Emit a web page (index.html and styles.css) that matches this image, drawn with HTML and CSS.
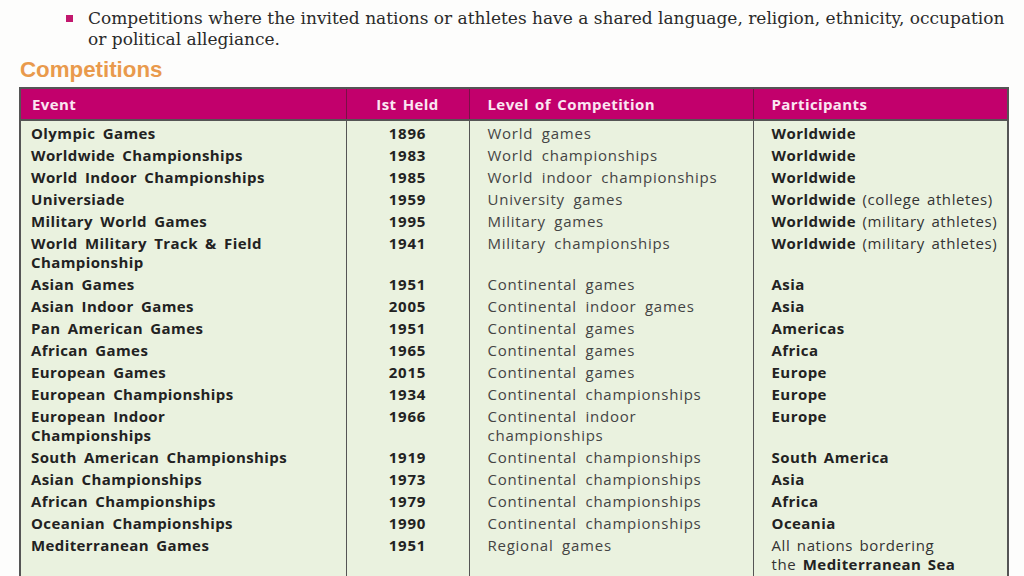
FILE: index.html
```html
<!DOCTYPE html>
<html lang="en">
<head>
<meta charset="utf-8">
<title>Competitions</title>
<link rel="stylesheet" href="styles.css">
</head>
<body>
<div class="page">
  <ul class="intro">
    <li>Competitions where the invited nations or athletes have a shared language, religion, ethnicity, occupation or political allegiance.</li>
  </ul>
  <h2 class="title">Competitions</h2>
  <table class="comp">
    <colgroup>
      <col class="c-event"><col class="c-year"><col class="c-level"><col class="c-part">
    </colgroup>
    <thead>
      <tr><th>Event</th><th class="center">Ist Held</th><th class="pad">Level of Competition</th><th class="pad">Participants</th></tr>
    </thead>
    <tbody>
      <tr class="first"><td>Olympic Games</td><td class="year">1896</td><td class="lvl">World games</td><td class="part"><b>Worldwide</b></td></tr>
      <tr><td>Worldwide Championships</td><td class="year">1983</td><td class="lvl">World championships</td><td class="part"><b>Worldwide</b></td></tr>
      <tr><td>World Indoor Championships</td><td class="year">1985</td><td class="lvl">World indoor championships</td><td class="part"><b>Worldwide</b></td></tr>
      <tr><td>Universiade</td><td class="year">1959</td><td class="lvl">University games</td><td class="part"><b>Worldwide</b> (college athletes)</td></tr>
      <tr><td>Military World Games</td><td class="year">1995</td><td class="lvl">Military games</td><td class="part"><b>Worldwide</b> (military athletes)</td></tr>
      <tr><td>World Military Track &amp; Field<br>Championship</td><td class="year">1941</td><td class="lvl">Military championships</td><td class="part"><b>Worldwide</b> (military athletes)</td></tr>
      <tr><td>Asian Games</td><td class="year">1951</td><td class="lvl">Continental games</td><td class="part"><b>Asia</b></td></tr>
      <tr><td>Asian Indoor Games</td><td class="year">2005</td><td class="lvl">Continental indoor games</td><td class="part"><b>Asia</b></td></tr>
      <tr><td>Pan American Games</td><td class="year">1951</td><td class="lvl">Continental games</td><td class="part"><b>Americas</b></td></tr>
      <tr><td>African Games</td><td class="year">1965</td><td class="lvl">Continental games</td><td class="part"><b>Africa</b></td></tr>
      <tr><td>European Games</td><td class="year">2015</td><td class="lvl">Continental games</td><td class="part"><b>Europe</b></td></tr>
      <tr><td>European Championships</td><td class="year">1934</td><td class="lvl">Continental championships</td><td class="part"><b>Europe</b></td></tr>
      <tr><td>European Indoor<br>Championships</td><td class="year">1966</td><td class="lvl">Continental indoor<br>championships</td><td class="part"><b>Europe</b></td></tr>
      <tr><td>South American Championships</td><td class="year">1919</td><td class="lvl">Continental championships</td><td class="part"><b>South America</b></td></tr>
      <tr><td>Asian Championships</td><td class="year">1973</td><td class="lvl">Continental championships</td><td class="part"><b>Asia</b></td></tr>
      <tr><td>African Championships</td><td class="year">1979</td><td class="lvl">Continental championships</td><td class="part"><b>Africa</b></td></tr>
      <tr><td>Oceanian Championships</td><td class="year">1990</td><td class="lvl">Continental championships</td><td class="part"><b>Oceania</b></td></tr>
      <tr><td>Mediterranean Games</td><td class="year">1951</td><td class="lvl">Regional games</td><td class="part">All nations bordering<br>the <b>Mediterranean Sea</b></td></tr>
    </tbody>
  </table>
</div>
</body>
</html>
```
FILE: styles.css
```css
html, body {
  margin: 0;
  padding: 0;
  background: #fdfdfc;
  overflow: hidden;
}
.page {
  width: 1024px;
  height: 576px;
  overflow: hidden;
  padding: 8px 0 0 19px;
  box-sizing: border-box;
}
.intro {
  list-style: none;
  margin: 0;
  padding: 0 0 0 69px;
  font-family: "DejaVu Serif", "Liberation Serif", serif;
  font-size: 17px;
  line-height: 21px;
  color: #2a2a2a;
  width: 928px;
}
.intro li {
  position: relative;
}
.intro li::before {
  content: "";
  position: absolute;
  left: -22px;
  top: 7px;
  width: 7px;
  height: 7px;
  background: #c2186e;
}
.title {
  margin: 9px 0 6px 1px;
  font-family: "Liberation Sans", Arial, sans-serif;
  font-weight: bold;
  font-size: 22.3px;
  line-height: 22px;
  color: #e99a4c;
}
.comp {
  border-collapse: collapse;
  width: 988px;
  table-layout: fixed;
  font-family: "Open Sans", "Lato", sans-serif;
  font-size: 15px;
  color: #222;
  background: #eaf2df;
  border: 2px solid #555;
}
.c-event { width: 326px; }
.c-year { width: 123px; }
.c-level { width: 284px; }
.c-part { width: 255px; }
.comp th {
  background: #c2006c;
  color: #fbe6f2;
  font-weight: bold;
  text-align: left;
  height: 30px;
  padding: 0 11px;
  font-size: 15px;
  letter-spacing: 0.4px;
  border-left: 1px solid #7a1046;
  border-bottom: 2px solid #555;
  word-spacing: 2px;
}
.comp th.center { text-align: center; }
.comp th.pad { padding-left: 18px; }
.comp td {
  vertical-align: top;
  padding: 1px 10px 2px 10px;
  line-height: 19px;
  border-left: 1.5px solid #555;
  font-weight: bold;
  letter-spacing: 0.4px;
  word-spacing: 3px;
  white-space: nowrap;
}
.comp tr.first td { padding-top: 3px; }
.comp td.year { text-align: center; letter-spacing: 0.8px; }
.comp td.lvl {
  font-weight: normal;
  color: #444;
  padding-left: 18px;
  letter-spacing: 0.75px;
  word-spacing: 4px;
}
.comp td.part {
  font-weight: normal;
  color: #333;
  padding-left: 18px;
  letter-spacing: 0.6px;
  word-spacing: 2px;
}
.comp td.part b {
  font-weight: bold;
  color: #222;
  letter-spacing: 0.45px;
}
```
